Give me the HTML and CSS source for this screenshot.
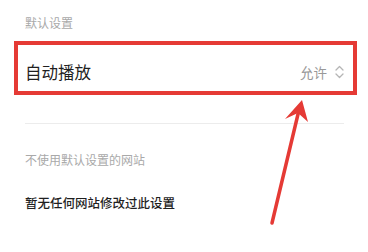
FILE: index.html
```html
<!DOCTYPE html>
<html lang="zh-CN">
<head>
  <meta charset="UTF-8">
  <title>自动播放</title>
  <link rel="stylesheet" href="styles.css">
</head>
<body>
  <div class="pagina">
    <p class="etichetta">默认设置</p>

    <div class="riga">
      <span class="titolo">自动播放</span>
      <span class="valore">
        允许
        <svg class="freccine" width="9" height="14" viewBox="0 0 9 14">
          <path d="M1 5 L4.5 1.5 L8 5" />
          <path d="M1 9 L4.5 12.5 L8 9" />
        </svg>
      </span>
      <div class="evidenzia"></div>
    </div>

    <div class="linea"></div>

    <p class="etichetta secondo">不使用默认设置的网站</p>
    <p class="vuoto">暂无任何网站修改过此设置</p>
  </div>

  <!-- freccia rossa di annotazione -->
  <svg class="annotazione" width="368" height="252" viewBox="0 0 368 252">
    <line x1="272" y1="223" x2="299" y2="110" />
    <polygon points="302,100 285,119 298,113 308,122" />
  </svg>
</body>
</html>
```

FILE: styles.css
```css
body {
  margin: 0;
  background: #fff;
  font-family: "Noto Sans CJK SC", "Noto Sans", sans-serif;
  width: 368px;
  height: 252px;
  overflow: hidden;
  position: relative;
}

.pagina {
  padding: 15px 24px 0 25px;
}

p {
  margin: 0;
}

.etichetta {
  font-size: 12px;
  line-height: 16px;
  color: #a9a9a9;
}

.riga {
  position: relative;
  margin-top: 10px;
  height: 54px;
  padding-top: 7px;
  box-sizing: border-box;
  display: flex;
  align-items: center;
  justify-content: space-between;
}

.titolo {
  font-size: 16.5px;
  color: #1f1f1f;
}

.valore {
  display: flex;
  align-items: center;
  gap: 8px;
  font-size: 13.5px;
  color: #999;
}

.freccine path {
  fill: none;
  stroke: #b5b5b5;
  stroke-width: 1.3;
  stroke-linecap: round;
  stroke-linejoin: round;
}

/* riquadro rosso sopra la riga */
.evidenzia {
  position: absolute;
  left: -11px;
  right: -13px;
  top: 0;
  bottom: 0;
  border: 4px solid #e53a35;
}

.linea {
  margin-top: 28px;
  border-top: 1px solid #ececec;
}

.secondo {
  margin-top: 28px;
}

.vuoto {
  margin-top: 26px;
  font-size: 12.5px;
  line-height: 18px;
  color: #1f1f1f;
  font-weight: 500;
}

.annotazione {
  position: absolute;
  left: 0;
  top: 0;
  pointer-events: none;
}
.annotazione line {
  stroke: #e53a35;
  stroke-width: 3.5;
  stroke-linecap: round;
}
.annotazione polygon {
  fill: #e53a35;
}
```
